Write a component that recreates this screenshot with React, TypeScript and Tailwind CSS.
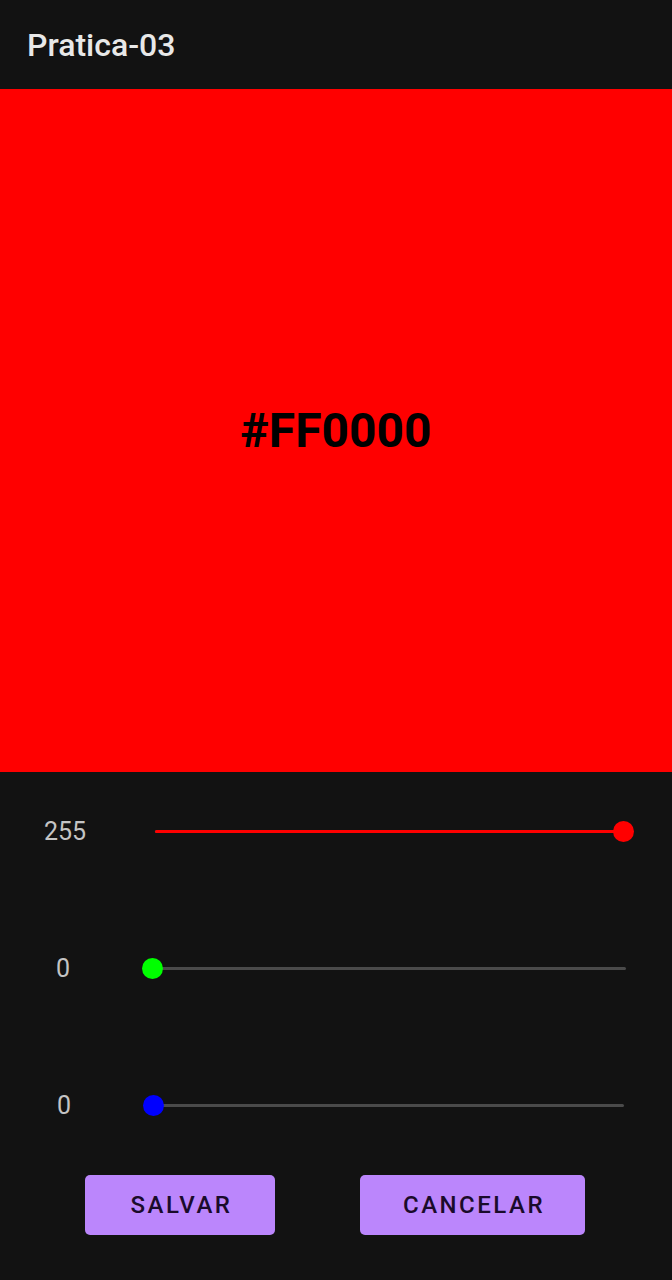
import React from "react";

const font = { fontFamily: "Roboto, 'Noto Sans', sans-serif" };

function SliderRow({ label, value, color, labelClass, trackRight }: { label: string; value: number; color: string; labelClass: string; trackRight: string }) {
  const frac = value / 255;
  return (
    <div className="flex items-center h-[40px]">
      <div className={`w-[128px] text-[25px] text-[#c4c4c4] ${labelClass}`}>{label}</div>
      <div className="relative h-[40px] w-[490px]">
        <div className={`absolute left-[10px] top-[18px] h-[3px] bg-[#4a4a4a] rounded-full ${trackRight}`} />
        <div
          className="absolute left-[10px] top-[18px] h-[3px] rounded-full"
          style={{ width: `${frac * 468}px`, backgroundColor: color }}
        />
        <div
          className="absolute top-[9px] w-[21px] h-[21px] rounded-full"
          style={{ left: `${frac * 468}px`, backgroundColor: color }}
        />
      </div>
    </div>
  );
}

export default function App() {
  return (
    <div className="w-[672px] h-[1280px] bg-[#121212] flex flex-col" style={font}>
      <div className="h-[89px] flex items-center pl-[27px]">
        <span className="text-[32px] font-medium text-[#e8e8e8] leading-none">Pratica-03</span>
      </div>
      <div className="h-[683px] bg-[#ff0000] flex items-center justify-center">
        <span className="text-[48px] font-bold text-black leading-none pt-[1px]">#FF0000</span>
      </div>
      <div className="flex flex-col pt-[40px] gap-[97px]">
        <div className="pl-[17px]">
          <SliderRow label="255" value={255} color="#ff0000" labelClass="text-center pr-[32px]" trackRight="right-[10px]" />
        </div>
        <div className="pl-[14px]">
          <SliderRow label="0" value={0} color="#00ff00" labelClass="pl-[42px]" trackRight="right-[6px]" />
        </div>
        <div className="pl-[15px]">
          <SliderRow label="0" value={0} color="#0000ff" labelClass="pl-[42px]" trackRight="right-[9px]" />
        </div>
      </div>
      <div className="flex justify-center gap-[85px] mt-[49px] pr-[2px]">
        <button className="w-[190px] h-[60px] rounded-[5px] bg-[#bb86fc] text-[#1a0b2b] text-[24px] font-medium tracking-[2.5px] pl-[3px]">
          SALVAR
        </button>
        <button className="w-[225px] h-[60px] rounded-[5px] bg-[#bb86fc] text-[#1a0b2b] text-[24px] font-medium tracking-[2.5px] pl-[3px]">
          CANCELAR
        </button>
      </div>
    </div>
  );
}
